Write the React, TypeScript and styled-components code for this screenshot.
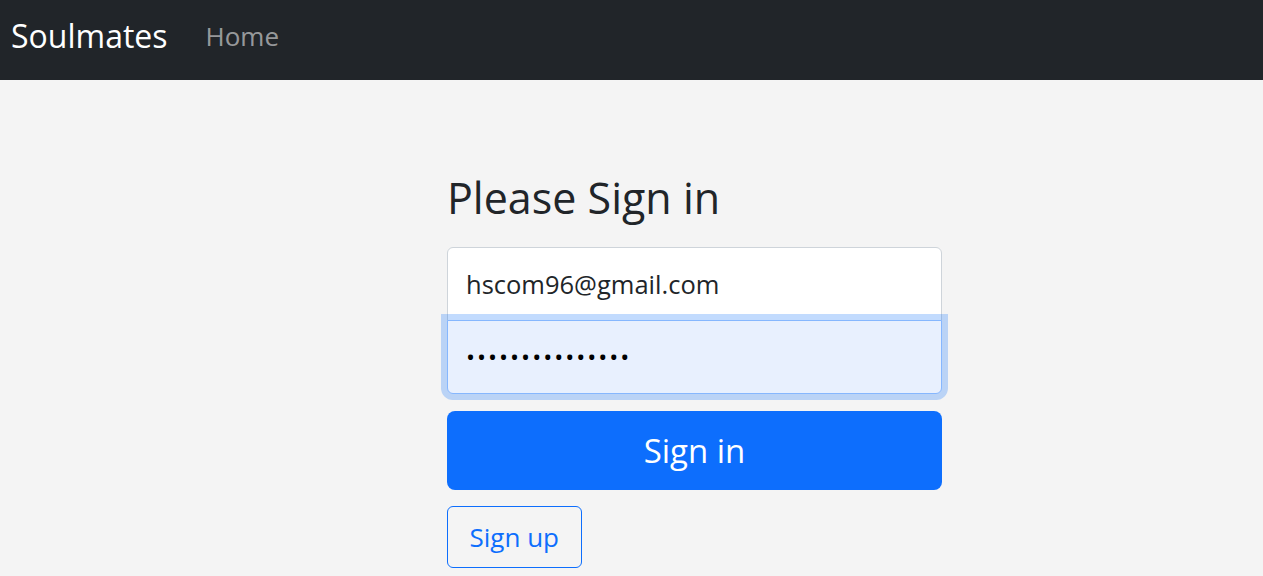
import React from "react";
import styled, { createGlobalStyle } from "styled-components";

const GlobalStyle = createGlobalStyle`
  * {
    box-sizing: border-box;
  }
  body {
    margin: 0;
    background: #f4f4f4;
    font-family: "Open Sans", "Noto Sans CJK KR", sans-serif;
    color: #212529;
  }
`;

const Navbar = styled.nav`
  height: 80px;
  background: #212529;
  display: flex;
  align-items: center;
  padding: 0 11px 9px;
  gap: 38px;
`;

const Brand = styled.a`
  font-size: 32px;
  color: #fff;
  text-decoration: none;
  line-height: 1;
`;

const NavLink = styled.a`
  font-size: 26px;
  color: rgba(255, 255, 255, 0.55);
  text-decoration: none;
  line-height: 1;
`;

const Main = styled.main`
  padding: 92px 0 0 447px;
`;

const Form = styled.form`
  width: 495px;
  display: flex;
  flex-direction: column;
`;

const Title = styled.h1`
  margin: 0 0 23px;
  font-size: 43px;
  font-weight: 400;
  line-height: 1.2;
`;

const Field = styled.input<{ $position: "top" | "bottom"; $focused?: boolean }>`
  display: block;
  width: 100%;
  height: 74px;
  padding: 0 18px;
  font-family: inherit;
  font-size: 25.5px;
  color: #212529;
  background: ${(p) => (p.$focused ? "#e8f0fe" : "#fff")};
  border: 1px solid ${(p) => (p.$focused ? "#86b7fe" : "#ced4da")};
  border-radius: ${(p) => (p.$position === "top" ? "6px 6px 0 0" : "0 0 6px 6px")};
  margin-top: ${(p) => (p.$position === "bottom" ? "-1px" : "0")};
  outline: none;
  box-shadow: ${(p) => (p.$focused ? "0 0 0 6px rgba(13, 110, 253, 0.25)" : "none")};
  position: relative;
  z-index: ${(p) => (p.$focused ? 1 : 0)};
  &[type="password"] {
    font-size: 24px;
    letter-spacing: 2px;
    color: #000;
  }
`;

const PrimaryButton = styled.button`
  margin-top: 17px;
  height: 79px;
  width: 100%;
  border: none;
  border-radius: 8px;
  background: #0d6efd;
  color: #fff;
  font-family: inherit;
  font-size: 33px;
  cursor: pointer;
`;

const OutlineButton = styled.button`
  margin-top: 16px;
  align-self: flex-start;
  height: 62px;
  padding: 0 21.5px;
  background: transparent;
  border: 1px solid #0d6efd;
  border-radius: 6px;
  color: #0d6efd;
  font-family: inherit;
  font-size: 26px;
  cursor: pointer;
`;

export default function App() {
  return (
    <>
      <GlobalStyle />
      <Navbar>
        <Brand href="#">Soulmates</Brand>
        <NavLink href="#">Home</NavLink>
      </Navbar>
      <Main>
        <Form onSubmit={(e) => e.preventDefault()}>
          <Title>Please Sign in</Title>
          <Field $position="top" type="email" defaultValue="hscom96@gmail.com" />
          <Field $position="bottom" $focused type="password" defaultValue="passwordpasswor" />
          <PrimaryButton type="submit">Sign in</PrimaryButton>
          <OutlineButton type="button">Sign up</OutlineButton>
        </Form>
      </Main>
    </>
  );
}
